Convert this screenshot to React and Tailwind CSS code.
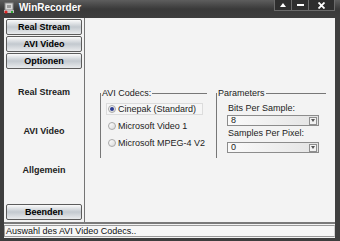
import React from "react";

function NavButton({ children }) {
  return (
    <div className="h-[16px] flex items-center justify-center rounded-[2px] border border-[#5c5c5c] bg-gradient-to-b from-[#fbfbfb] via-[#c3c9cf] to-[#e9ebed] text-[9px] font-bold text-black leading-none">
      {children}
    </div>
  );
}

function Radio({ checked, label, highlight }) {
  return (
    <div
      className={
        "h-[12px] flex items-center gap-[2px] pl-[1px] w-[97px] whitespace-nowrap " +
        (highlight ? "border border-[#dcdcdc] bg-[#f6f6f6]" : "border border-transparent")
      }
    >
      <div className="w-[8px] h-[8px] shrink-0 rounded-full border border-[#a9a9a9] bg-gradient-to-br from-[#ffffff] to-[#d9d9d9] flex items-center justify-center">
        {checked && <div className="w-[4px] h-[4px] rounded-full bg-[#2b3c93]" />}
      </div>
      <span className="text-[9px] leading-none text-[#222]">{label}</span>
    </div>
  );
}

function Select({ value }) {
  return (
    <div className="h-[11px] w-[92px] flex items-center border border-[#8c8c8c] bg-gradient-to-r from-[#fafafa] to-[#e4e4e4] pl-[3px] pr-[1px]">
      <span className="flex-1 text-[9px] leading-none text-[#222]">{value}</span>
      <div className="w-[8px] h-[8px] border border-[#8f8f8f] bg-[#f2f2f2] flex items-center justify-center">
        <svg width="4" height="3" viewBox="0 0 4 3">
          <path d="M0 0 L4 0 L2 3 Z" fill="#555" />
        </svg>
      </div>
    </div>
  );
}

export default function App() {
  return (
    <div className="w-[340px] h-[241px] bg-[#3e3e3e] flex flex-col overflow-hidden font-['Liberation_Sans',sans-serif]">
      {/* Title bar */}
      <div className="h-[18px] flex items-start bg-gradient-to-b from-[#5e5e5e] via-[#3a3a3a] to-[#3e3e3e]">
        <div className="ml-[3px] mt-[2px] w-[12px] h-[12px]">
          <svg width="12" height="12" viewBox="0 0 12 12">
            <rect x="2" y="1" width="8" height="7" fill="#d8d8d8" stroke="#888" strokeWidth="1" />
            <rect x="4" y="3" width="4" height="3" fill="#9a9a9a" />
            <rect x="1" y="8" width="10" height="3" fill="#bdbdbd" />
            <circle cx="3" cy="10" r="1.6" fill="#d22" />
            <rect x="8" y="9" width="2" height="2" fill="#3a3" />
          </svg>
        </div>
        <span className="ml-[4px] mt-[3px] text-[10px] font-bold text-white leading-none">WinRecorder</span>
        <div className="ml-auto mr-[5px] flex h-[11px]">
          <div className="w-[18px] flex items-center justify-center bg-[#2e2e2e] border border-[#6a6a6a] border-t-0">
            <svg width="6" height="4" viewBox="0 0 6 4"><path d="M0 4 L6 4 L3 0 Z" fill="#fff" /></svg>
          </div>
          <div className="w-[17px] flex items-center justify-center bg-[#2e2e2e] border border-[#6a6a6a] border-t-0 border-l-0">
            <div className="w-[7px] h-[2px] bg-white" />
          </div>
          <div className="w-[26px] flex items-center justify-center bg-[#2e2e2e] border border-[#6a6a6a] border-t-0 border-l-0">
            <svg width="7" height="7" viewBox="0 0 7 7">
              <path d="M0.5 0.5 L6.5 6.5 M6.5 0.5 L0.5 6.5" stroke="#fff" strokeWidth="1.8" />
            </svg>
          </div>
        </div>
      </div>

      {/* Client */}
      <div className="flex-1 ml-[4px] mr-[5px] flex flex-col bg-[#f3f3f3]">
        <div className="flex-1 flex">
          {/* Left panel */}
          <div className="w-[81px] border-r border-[#747474] flex flex-col px-[2px] pt-[1px] pb-[2px]">
            <div className="flex flex-col gap-[1px]">
              <NavButton>Real Stream</NavButton>
              <NavButton>AVI Video</NavButton>
              <NavButton>Optionen</NavButton>
            </div>
            <div className="flex flex-col items-center gap-[28px] mt-[18px] text-[9px] font-bold text-[#222] leading-[11px]">
              <span>Real Stream</span>
              <span>AVI Video</span>
              <span>Allgemein</span>
            </div>
            <div className="mt-auto">
              <NavButton>Beenden</NavButton>
            </div>
          </div>

          {/* Right content */}
          <div className="flex-1 flex items-start pl-[15px] pt-[70px] gap-[9px]">
            <fieldset className="w-[107px] h-[70px] border-t border-l border-[#777] m-0 p-0">
              <legend className="text-[9px] leading-[11px] text-[#222] pl-[1px] pr-[1px]">AVI Codecs:</legend>
              <div className="flex flex-col gap-[5px] pl-[5px] pt-[4px]">
                <Radio checked highlight label="Cinepak (Standard)" />
                <Radio label="Microsoft Video 1" />
                <Radio label="Microsoft MPEG-4 V2" />
              </div>
            </fieldset>
            <fieldset className="w-[110px] h-[70px] border-t border-l border-[#777] m-0 p-0">
              <legend className="text-[9px] leading-[11px] text-[#222] pl-[1px] pr-[1px]">Parameters</legend>
              <div className="flex flex-col pl-[10px] pt-[4px]">
                <span className="text-[9px] leading-[11px] text-[#222] ml-[1px]">Bits Per Sample:</span>
                <div className="mt-[1px]">
                  <Select value="8" />
                </div>
                <span className="text-[9px] leading-[11px] text-[#222] ml-[1px] mt-[2px]">Samples Per Pixel:</span>
                <div className="mt-[3px]">
                  <Select value="0" />
                </div>
              </div>
            </fieldset>
          </div>
        </div>

        {/* Status bar */}
        <div className="h-[2px] bg-[#7a7a7a]" />
        <div className="h-[12px] mt-[1px] mb-[1px] border border-[#9a9a9a] border-r-[#d0d0d0] bg-[#f7f7f7] flex items-center pl-[1px]">
          <span className="text-[9px] leading-none text-[#111]">Auswahl des AVI Video Codecs..</span>
        </div>
      </div>
      <div className="h-[3px]" />
    </div>
  );
}
